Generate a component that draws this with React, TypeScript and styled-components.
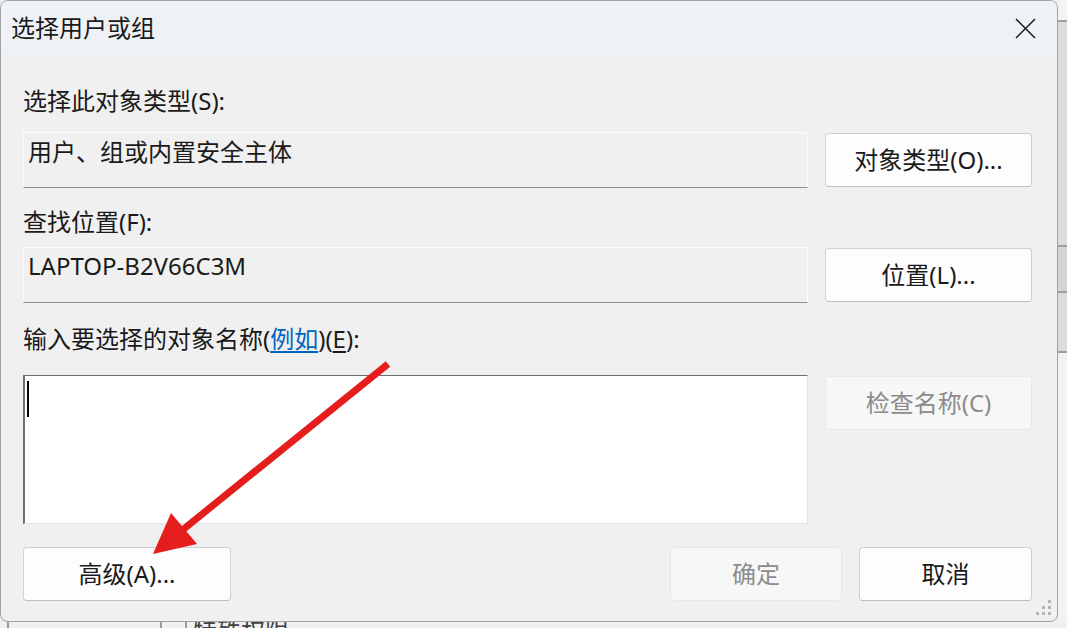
import React from 'react';
import styled, { createGlobalStyle } from 'styled-components';

const GlobalStyle = createGlobalStyle`
  html, body {
    margin: 0;
    padding: 0;
    width: 1067px;
    height: 628px;
    overflow: hidden;
    background: #e6e6e6;
  }
  body {
    font-family: "Noto Sans", "Noto Sans CJK SC", sans-serif;
    color: #1a1a1a;
  }
  * { box-sizing: border-box; }
`;

const Desktop = styled.div`
  position: relative;
  display: grid;
  grid-template-columns: 1058px 1fr;
  grid-template-rows: 622px 1fr;
  width: 1067px;
  height: 628px;
  background: #ececec;
`;

const Dialog = styled.div`
  position: relative;
  display: flex;
  flex-direction: column;
  background: #f0f0f0;
  border: 1px solid #a2a2a2;
  border-radius: 8px;
  overflow: hidden;
`;

const TitleBar = styled.div`
  display: flex;
  align-items: center;
  justify-content: space-between;
  height: 54px;
  padding: 0 21px 0 10px;
  background: #eef2f7;
`;

const Title = styled.div`
  font-size: 24px;
  line-height: 30px;
`;

const CloseButton = styled.div`
  display: flex;
  width: 22px;
  height: 22px;
  align-items: center;
  justify-content: center;
`;

const Body = styled.div`
  display: flex;
  flex-direction: column;
  padding: 0 25px 0 22px;
`;

const Label = styled.div<{ $top: number }>`
  margin-top: ${p => p.$top}px;
  font-size: 24px;
  line-height: 30px;
  white-space: nowrap;
`;

const Link = styled.span`
  color: #0067c0;
  text-decoration: underline;
  text-underline-offset: 3px;
`;

const AccessKey = styled.span`
  text-decoration: underline;
  text-underline-offset: 3px;
`;

const FieldRow = styled.div<{ $top: number }>`
  display: grid;
  grid-template-columns: 785px 207px;
  column-gap: 17px;
  align-items: start;
  margin-top: ${p => p.$top}px;
`;

const ReadOnlyBox = styled.div<{ $pad: number }>`
  height: 56px;
  padding: ${p => p.$pad}px 4px 0;
  border: 1px solid #fbfbfb;
  border-bottom-color: #8e8e8e;
  font-size: 24px;
  line-height: 30px;
  white-space: nowrap;
`;

const TextArea = styled.div`
  height: 149px;
  padding: 5px 2px;
  background: #ffffff;
  border: 1px solid #e2e2e2;
  border-top-color: #6f6f6f;
  border-left: 2px solid #6f6f6f;
`;

const Caret = styled.div`
  width: 2px;
  height: 36px;
  background: #000;
`;

const Button = styled.div<{ $disabled?: boolean; $w?: number }>`
  display: flex;
  align-items: center;
  justify-content: center;
  width: ${p => (p.$w ? `${p.$w}px` : 'auto')};
  height: 54px;
  margin-top: 1px;
  border: 1px solid ${p => (p.$disabled ? '#e9e9e9' : '#d0d0d0')};
  border-bottom-color: ${p => (p.$disabled ? '#e9e9e9' : '#bdbdbd')};
  border-radius: 4px;
  background: ${p => (p.$disabled ? '#f7f7f7' : '#fdfdfd')};
  color: ${p => (p.$disabled ? '#8c8c8c' : '#1a1a1a')};
  font-size: 24px;
  line-height: 30px;
  white-space: nowrap;
`;

const ButtonBar = styled.div`
  display: flex;
  align-items: center;
  gap: 17px;
  margin-top: 22px;
`;

const Spacer = styled.div`
  flex: 1;
`;

const Grip = styled.svg`
  position: absolute;
  right: 4px;
  bottom: 4px;
`;

const RightStrip = styled.div`
  display: flex;
  flex-direction: column;
  background: #f2f2f2;
`;

const StripCell = styled.div<{ $h: number; $bg: string }>`
  height: ${p => p.$h}px;
  background: ${p => p.$bg};
  border-bottom: 2px solid #9e9e9e;
`;

const BottomStrip = styled.div`
  grid-column: 1 / span 2;
  display: flex;
  overflow: hidden;
  background: #f0f0f0;
`;

const BottomCell = styled.div<{ $w: number; $first?: boolean }>`
  width: ${p => p.$w}px;
  height: 100%;
  border-left: ${p => (p.$first ? 'none' : '2px solid #9a9a9a')};
`;

const BackText = styled.div`
  margin: -3px 0 0 6px;
  font-size: 24px;
  line-height: 24px;
  color: #404040;
  white-space: nowrap;
`;

const Overlay = styled.svg`
  position: absolute;
  left: 0;
  top: 0;
  pointer-events: none;
`;

export default function App() {
  return (
    <>
      <GlobalStyle />
      <Desktop>
        <Dialog>
          <TitleBar>
            <Title>选择用户或组</Title>
            <CloseButton>
              <svg width="21" height="21" viewBox="0 0 21 21">
                <path d="M1 1 L20 20 M20 1 L1 20" stroke="#1a1a1a" strokeWidth="1.5" />
              </svg>
            </CloseButton>
          </TitleBar>
          <Body>
            <Label $top={31}>选择此对象类型(S):</Label>
            <FieldRow $top={16}>
              <ReadOnlyBox $pad={4}>用户、组或内置安全主体</ReadOnlyBox>
              <Button>对象类型(O)...</Button>
            </FieldRow>
            <Label $top={19}>查找位置(F):</Label>
            <FieldRow $top={10}>
              <ReadOnlyBox $pad={3}>LAPTOP-B2V66C3M</ReadOnlyBox>
              <Button>位置(L)...</Button>
            </FieldRow>
            <Label $top={21}>
              输入要选择的对象名称(<Link>例如</Link>)(<AccessKey>E</AccessKey>):
            </Label>
            <FieldRow $top={21}>
              <TextArea>
                <Caret />
              </TextArea>
              <Button $disabled>检查名称(C)</Button>
            </FieldRow>
            <ButtonBar>
              <Button $w={208}>高级(A)...</Button>
              <Spacer />
              <Button $w={172} $disabled>确定</Button>
              <Button $w={173}>取消</Button>
            </ButtonBar>
          </Body>
          <Grip width="18" height="18" viewBox="0 0 18 18">
            <g fill="#b4b4b4">
              <rect x="13" y="1" width="3" height="3" />
              <rect x="7" y="7" width="3" height="3" />
              <rect x="13" y="7" width="3" height="3" />
              <rect x="1" y="13" width="3" height="3" />
              <rect x="7" y="13" width="3" height="3" />
              <rect x="13" y="13" width="3" height="3" />
            </g>
          </Grip>
        </Dialog>
        <RightStrip>
          <StripCell $h={22} $bg="#f3f3f3" />
          <StripCell $h={225} $bg="#dcdcdc" />
          <StripCell $h={46} $bg="#d4d4d4" />
          <StripCell $h={60} $bg="#dcdcdc" />
        </RightStrip>
        <BottomStrip>
          <BottomCell $w={7} $first />
          <BottomCell $w={153} />
          <BottomCell $w={25} />
          <BottomCell $w={880}>
            <BackText>特殊权限</BackText>
          </BottomCell>
        </BottomStrip>
        <Overlay width="1067" height="628" viewBox="0 0 1067 628">
          <line x1="388" y1="364" x2="180" y2="532" stroke="#e51d1d" strokeWidth="7" />
          <polygon points="153,554 171,513 197,544" fill="#e51d1d" />
        </Overlay>
      </Desktop>
    </>
  );
}
